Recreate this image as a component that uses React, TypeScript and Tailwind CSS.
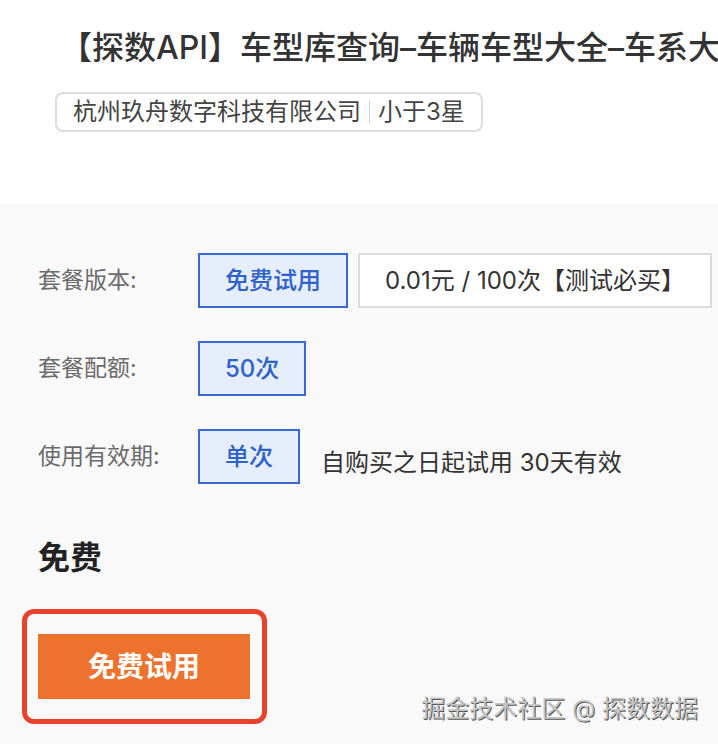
import React from "react";

const FONT = 'Inter, "Noto Sans CJK SC", "Noto Sans", sans-serif';

function Opt({
  children,
  active,
}: {
  children: React.ReactNode;
  active?: boolean;
}) {
  return (
    <div
      className={
        active
          ? "h-[55px] shrink-0 px-[25px] flex items-center border-2 border-[#3868d6] bg-[#e6eefc] text-[#2f62cc] text-[24px] font-medium leading-none whitespace-nowrap"
          : "h-[55px] shrink-0 px-[25px] flex items-center border-2 border-[#dcdcdc] bg-white text-[#333] text-[24px] leading-none whitespace-nowrap"
      }
    >
      {children}
    </div>
  );
}

function Row({
  label,
  children,
}: {
  label: string;
  children: React.ReactNode;
}) {
  return (
    <div className="flex items-center">
      <div className="w-[160px] shrink-0 text-[23px] text-[#6b6b6b] leading-none whitespace-nowrap">
        {label}
      </div>
      <div className="flex items-center gap-[10px]">{children}</div>
    </div>
  );
}

export default function App() {
  return (
    <div
      className="relative w-full h-[744px] overflow-hidden bg-white flex flex-col"
      style={{ fontFamily: FONT }}
    >
      <div className="h-[204px] shrink-0 pl-[60px] pt-[26px] overflow-hidden">
        <div className="text-[32px] leading-[44px] font-medium text-[#333] whitespace-nowrap">
          【探数API】车型库查询–车辆车型大全–车系大全–车型配置查询
        </div>
        <div className="mt-[22px] -ml-[5px] inline-flex items-center h-[40px] px-[16px] border-2 border-[#dddddd] rounded-lg text-[24px] text-[#444] leading-none whitespace-nowrap">
          <span>杭州玖舟数字科技有限公司</span>
          <span className="mx-[8px] w-px h-[24px] bg-[#d6d6d6]" />
          <span>小于3星</span>
        </div>
      </div>

      <div className="flex-1 bg-[#f9f9f9] pl-[38px] pt-[49px] flex flex-col">
        <div className="flex flex-col gap-[33px]">
          <Row label="套餐版本:">
            <Opt active>免费试用</Opt>
            <Opt>0.01元 / 100次【测试必买】</Opt>
            <Opt>1元 / 1000次</Opt>
          </Row>
          <Row label="套餐配额:">
            <Opt active>50次</Opt>
          </Row>
          <Row label="使用有效期:">
            <Opt active>单次</Opt>
            <div className="ml-[11px] mt-[12px] text-[24px] text-[#333] leading-none whitespace-nowrap">
              自购买之日起试用 30天有效
            </div>
          </Row>
        </div>

        <div className="mt-[52px] text-[32px] leading-[44px] font-bold text-[#222]">
          免费
        </div>

        <div className="mt-[29px] -ml-[16px] self-start border-[5px] border-[#e8412c] rounded-[12px] pl-[11px] pr-[12px] pt-[20px] pb-[20px]">
          <button className="w-[212px] h-[65px] bg-[#ec722e] text-white text-[28px] font-bold flex items-center justify-center leading-none">
            免费试用
          </button>
        </div>
      </div>

      <div className="absolute right-[20px] top-[694px] text-[24px] leading-[30px] text-[#c4c4c4] whitespace-nowrap [text-shadow:1px_1px_0_#555]">
        掘金技术社区 @ 探数数据
      </div>
    </div>
  );
}
